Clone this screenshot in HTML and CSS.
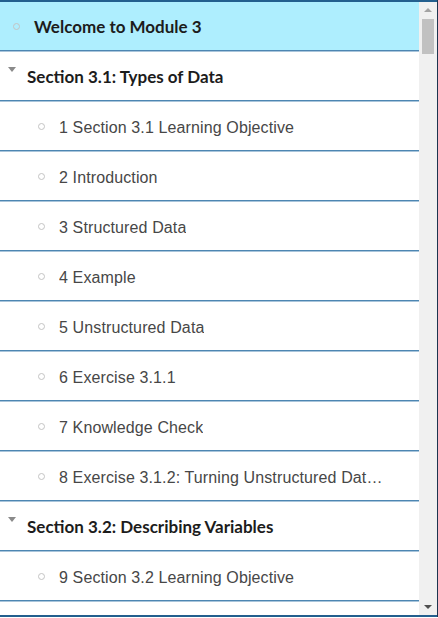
FILE: index.html
```html
<!DOCTYPE html>
<html>
<head>
<meta charset="utf-8">
<link rel="stylesheet" href="styles.css">
</head>
<body>
<div class="panel">
  <div class="list">
    <div class="row welcome"><span class="dot"></span><span class="title">Welcome to Module 3</span></div>
    <div class="row section"><span class="caret"></span><span class="title">Section 3.1: Types of Data</span></div>
    <div class="row item"><span class="dot"></span><span class="label">1 Section 3.1 Learning Objective</span></div>
    <div class="row item"><span class="dot"></span><span class="label">2 Introduction</span></div>
    <div class="row item"><span class="dot"></span><span class="label">3 Structured Data</span></div>
    <div class="row item"><span class="dot"></span><span class="label">4 Example</span></div>
    <div class="row item"><span class="dot"></span><span class="label">5 Unstructured Data</span></div>
    <div class="row item"><span class="dot"></span><span class="label">6 Exercise 3.1.1</span></div>
    <div class="row item"><span class="dot"></span><span class="label">7 Knowledge Check</span></div>
    <div class="row item"><span class="dot"></span><span class="label">8 Exercise 3.1.2: Turning Unstructured Data into Structured Data</span></div>
    <div class="row section"><span class="caret"></span><span class="title">Section 3.2: Describing Variables</span></div>
    <div class="row item"><span class="dot"></span><span class="label">9 Section 3.2 Learning Objective</span></div>
  </div>
  <div class="scrollbar">
    <span class="arrow up"></span>
    <span class="thumb"></span>
    <span class="track"></span>
    <span class="arrow down"></span>
  </div>
</div>
</body>
</html>
```
FILE: styles.css
```css
html, body {
  margin: 0;
  padding: 0;
  background: #ffffff;
}
body {
  width: 438px;
  height: 618px;
  overflow: hidden;
  display: flex;
}
.panel {
  width: 437px;
  height: 613px;
  border-top: 2px solid #235f8e;
  border-bottom: 2px solid #235f8e;
  display: flex;
  overflow: hidden;
  background: #fff;
}
body::after {
  content: "";
  width: 1px;
  height: 617px;
  background: #1d3550;
}
.list {
  width: 419px;
  flex: none;
  overflow: hidden;
}
.row {
  height: 48px;
  border-bottom: 1px solid #4d86b2;
  box-shadow: 0 1px 0 #a9c5db;
  margin-bottom: 1px;
  display: flex;
  align-items: center;
  box-sizing: content-box;
}
.welcome {
  background: #aeeefe;
  padding-left: 13px;
}
.welcome .dot {
  margin-right: 14px;
}
.title {
  font-family: Lato, "Noto Sans", sans-serif;
  font-weight: bold;
  font-size: 17px;
  color: #1c1c1c;
}
.section {
  padding-left: 8px;
}
.caret {
  width: 0;
  height: 0;
  border-left: 4px solid transparent;
  border-right: 4px solid transparent;
  border-top: 5px solid #8a8a8a;
  margin-right: 11px;
  align-self: flex-start;
  margin-top: 15px;
}
.dot {
  width: 5px;
  height: 5px;
  border: 1px solid #c4c4c4;
  border-radius: 50%;
  flex: none;
}
.item {
  padding-left: 38px;
}
.item .dot {
  margin-right: 14px;
}
.label {
  font-family: "Liberation Sans", Arial, sans-serif;
  font-size: 16px;
  letter-spacing: 0.12px;
  color: #474747;
  white-space: nowrap;
  overflow: hidden;
  text-overflow: ellipsis;
  max-width: 324px;
  padding-top: 3px;
}
.scrollbar {
  width: 18px;
  flex: none;
  background: #f0f0f0;
  display: flex;
  flex-direction: column;
  align-items: center;
}
.arrow {
  width: 0;
  height: 0;
  border-left: 4px solid transparent;
  border-right: 4px solid transparent;
}
.arrow.up {
  border-bottom: 4px solid #a3a3a3;
  margin-top: 6px;
}
.arrow.down {
  border-top: 4px solid #505050;
  margin-bottom: 6px;
}
.thumb {
  width: 12px;
  height: 35px;
  background: #c1c1c1;
  margin-top: 7px;
}
.track {
  flex: 1;
}
```
